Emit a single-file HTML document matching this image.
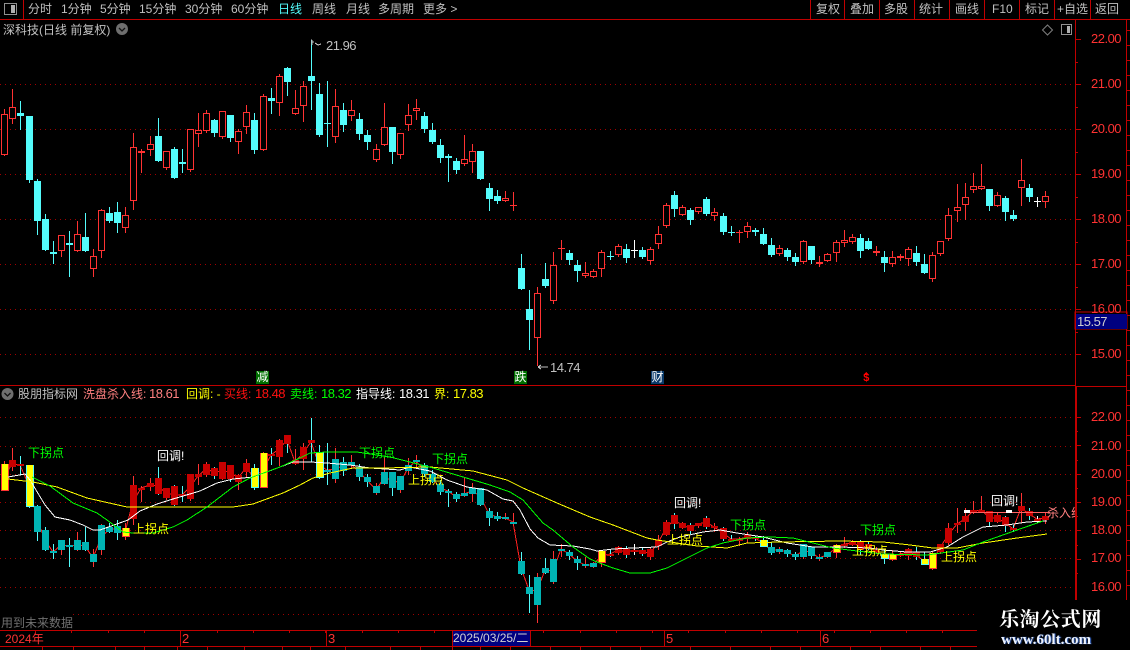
<!DOCTYPE html>
<html><head><meta charset="utf-8"><style>
html,body{margin:0;padding:0;background:#000;}
#r{position:relative;width:1130px;height:650px;background:#000;overflow:hidden;font-family:"Liberation Sans","WenQuanYi Zen Hei","Noto Sans CJK SC",sans-serif;font-size:12px;line-height:14px;color:#c0c0c0;}
#r span{position:absolute;white-space:nowrap;}
svg{position:absolute;left:0;top:0;}
.n{font-size:13px;letter-spacing:-.5px;}
.g{color:#00ff00;} .y{color:#ffff00;} .w{color:#fff;}
.ax{color:#ff3232;font-size:13px;letter-spacing:-.5px;}
</style></head><body><div id="r">
<svg id="s" width="1130" height="650" shape-rendering="crispEdges"></svg>
<span style="left:28px;top:2px">分时</span><span style="left:61px;top:2px">1分钟</span><span style="left:100px;top:2px">5分钟</span><span style="left:139px;top:2px">15分钟</span><span style="left:185px;top:2px">30分钟</span><span style="left:231px;top:2px">60分钟</span><span style="left:278px;top:2px;color:#54fcfc">日线</span><span style="left:312px;top:2px">周线</span><span style="left:346px;top:2px">月线</span><span style="left:378px;top:2px">多周期</span><span style="left:423px;top:2px">更多 &gt;</span>
<span style="left:816px;top:2px">复权</span><span style="left:850px;top:2px">叠加</span><span style="left:884px;top:2px">多股</span><span style="left:919px;top:2px">统计</span><span style="left:955px;top:2px">画线</span><span style="left:992px;top:2px">F10</span><span style="left:1025px;top:2px">标记</span><span style="left:1057px;top:2px">+自选</span><span style="left:1095px;top:2px">返回</span>
<span style="left:3px;top:23px">深科技(日线 前复权)</span>
<span class="n" style="left:326px;top:39px">21.96</span>
<span class="n" style="left:550px;top:361px">14.74</span>
<span style="left:256px;top:371px;width:13px;height:13px;background:#007000;color:#fff;text-align:center;line-height:13px">减</span>
<span style="left:514px;top:371px;width:13px;height:13px;background:#007000;color:#fff;text-align:center;line-height:13px">跌</span>
<span style="left:651px;top:371px;width:13px;height:13px;background:#0a3a6a;color:#fff;text-align:center;line-height:13px">财</span>
<span style="left:863px;top:373px;color:#ff0000;font-family:'Liberation Mono',monospace;font-weight:bold;font-size:11px;line-height:12px">$</span>
<span style="left:18px;top:387px">股朋指标网</span>
<span style="left:83px;top:387px;color:#ff8080">洗盘杀入线:</span><span class="n" style="left:149px;top:387px;color:#ff8080">18.61</span>
<span style="left:186px;top:387px;color:#ffff00">回调: -</span>
<span style="left:224px;top:387px;color:#ff1010">买线:</span><span class="n" style="left:255px;top:387px;color:#ff1010">18.48</span>
<span style="left:290px;top:387px;color:#00ff00">卖线:</span><span class="n" style="left:321px;top:387px;color:#00ff00">18.32</span>
<span style="left:356px;top:387px;color:#fff">指导线:</span><span class="n" style="left:399px;top:387px;color:#fff">18.31</span>
<span style="left:434px;top:387px;color:#ffff00">界:</span><span class="n" style="left:453px;top:387px;color:#ffff00">17.83</span>
<span class="g" style="left:28px;top:446px">下拐点</span><span class="w" style="left:157px;top:449px">回调!</span><span class="y" style="left:133px;top:522px">上拐点</span><span class="g" style="left:359px;top:446px">下拐点</span><span class="g" style="left:432px;top:452px">下拐点</span><span class="y" style="left:408px;top:473px">上拐点</span><span class="w" style="left:674px;top:496px">回调!</span><span class="y" style="left:667px;top:533px">上拐点</span><span class="g" style="left:730px;top:518px">下拐点</span><span class="g" style="left:860px;top:523px">下拐点</span><span class="y" style="left:852px;top:544px">上拐点</span><span class="y" style="left:941px;top:550px">上拐点</span><span class="w" style="left:991px;top:494px">回调!</span>
<span style="left:1047px;top:506px;width:28px;overflow:hidden;color:#ff8080">杀入线</span>
<span style="left:1px;top:616px;color:#707070">用到未来数据</span>
<span class="ax" style="left:5px;top:632px;font-size:12px;letter-spacing:0">2024年</span><span class="ax" style="left:182px;top:632px">2</span><span class="ax" style="left:328px;top:632px">3</span><span class="ax" style="left:666px;top:632px">5</span><span class="ax" style="left:822px;top:632px">6</span>
<span style="left:453px;top:631px;width:77px;height:15px;background:#000080;color:#d0d0d0;font-size:12px;line-height:15px;letter-spacing:0">2025/03/25/二</span>
<span class="ax" style="left:1091px;top:32px">22.00</span><span class="ax" style="left:1091px;top:77px">21.00</span><span class="ax" style="left:1091px;top:122px">20.00</span><span class="ax" style="left:1091px;top:167px">19.00</span><span class="ax" style="left:1091px;top:212px">18.00</span><span class="ax" style="left:1091px;top:257px">17.00</span><span class="ax" style="left:1091px;top:302px">16.00</span><span class="ax" style="left:1091px;top:347px">15.00</span>
<span style="left:1076px;top:314px;width:50px;height:15px;background:#000080;color:#d0d0d0;font-size:13px;line-height:15px;padding-left:1px;letter-spacing:-.5px">15.57</span>
<span class="ax" style="left:1091px;top:410px">22.00</span><span class="ax" style="left:1091px;top:439px">21.00</span><span class="ax" style="left:1091px;top:467px">20.00</span><span class="ax" style="left:1091px;top:495px">19.00</span><span class="ax" style="left:1091px;top:523px">18.00</span><span class="ax" style="left:1091px;top:551px">17.00</span><span class="ax" style="left:1091px;top:580px">16.00</span>
<span style="left:977px;top:600px;width:153px;height:50px;background:#000"></span>
<span style="left:999px;top:606px;color:#fff;font-family:'Noto Serif CJK SC','Liberation Serif',serif;font-size:20px;line-height:24px;font-weight:bold;letter-spacing:.6px">乐淘公式网</span>
<span style="left:1001px;top:632px;color:#eef4ff;font-family:'Liberation Serif',serif;font-size:15px;line-height:16px;font-weight:bold;text-shadow:1px 0 1px #3060c0">www.60lt.com</span>
</div>
<script>
var D="r,109,114,155,155;r,89,107,119,123;c,101,113,116,129;c,116,116,180,182;c,179,181,221,234;c,214,219,250,250;c,241,252,254,263;r,235,235,251,256;c,231,243,245,276;r,221,234,251,251;c,213,237,251,251;r,249,256,269,276;r,209,210,251,257;c,207,213,221,222;c,202,212,223,232;r,207,215,228,232;r,133,147,201,209;r,149,151,153,172;r,136,144,150,155;c,118,136,161,161;r,151,151,168,169;c,147,149,178,178;c,149,162,164,172;r,129,129,170,171;r,113,130,134,146;r,110,113,131,132;c,119,120,133,136;r,111,111,137,138;c,115,115,138,141;r,129,131,142,153;r,105,112,127,133;c,113,120,150,153;r,94,96,150,150;c,88,98,101,113;r,74,76,103,115;c,67,68,82,95;r,90,108,114,114;r,81,86,106,121;c,40,76,81,109;c,83,94,135,136;c,81,123,124,146;r,89,106,137,142;c,103,110,125,131;r,100,110,116,120;c,113,119,134,139;c,130,135,142,149;r,144,149,160,161;r,103,127,145,145;c,127,127,152,163;r,133,133,155,158;r,104,115,125,130;r,99,108,111,119;c,112,116,129,132;c,123,130,142,143;c,139,145,158,162;c,154,156,158,181;c,158,161,170,173;r,135,159,164,165;r,144,151,162,172;c,151,151,179,179;c,183,188,199,210;c,190,196,201,203;r,191,198,201,201;r,192,205,206,210;c,254,268,289,289;c,290,309,320,349;r,287,293,338,365;c,263,279,286,287;r,252,265,301,303;r,240,248,249,259;c,250,253,260,264;c,260,265,271,281;r,262,273,276,277;r,269,271,277,277;r,250,252,269,276;c,251,256,257,259;r,244,246,255,256;c,244,249,258,262;w,240,250,251,257;c,247,250,257,258;r,247,249,261,264;r,226,234,244,248;r,203,205,226,227;c,191,195,209,216;r,205,207,215,215;c,208,210,220,224;r,207,207,212,213;c,197,199,214,215;r,208,212,216,220;c,213,216,232,234;c,226,232,233,235;r,230,232,233,242;r,222,226,232,237;c,228,230,232,235;c,228,234,244,244;c,238,245,255,256;r,245,248,254,255;c,248,250,257,260;c,253,257,262,265;r,240,241,262,263;c,246,246,260,263;r,256,262,264,266;r,253,254,261,261;r,240,242,253,261;r,230,240,243,246;r,234,237,242,243;c,234,238,251,257;c,238,241,249,249;r,246,251,253,255;c,251,257,263,271;r,251,257,264,266;r,254,256,258,260;r,247,249,259,265;c,246,253,262,265;c,254,264,273,273;r,252,255,279,281;r,241,241,254,255;r,208,215,239,240;r,184,207,211,221;r,183,197,205,219;r,173,186,190,192;r,164,186,189,189;c,189,189,206,210;r,192,195,206,206;c,196,198,212,220;c,210,215,219,220;r,159,180,188,205;c,184,188,197,201;w,197,201,202,206;r,191,196,202,207".split(";").map(function(a){a=a.split(",");return[a[0],+a[1],+a[2],+a[3],+a[4]];});
var col={r:"#ff3232",c:"#54fcfc",w:"#ffffff"},LR="#c00000",o=[];
function R(x,y,w,h,f,s){o.push('<rect x="'+x+'" y="'+y+'" width="'+w+'" height="'+h+'" fill="'+f+'"'+(s?' stroke="'+s+'"':'')+'/>');}
function M(y){return Math.round(417+(y-39)*.6296);}
var G='stroke="#a00000" stroke-dasharray="1 4"';
[84,129,174,219,264,309,354].forEach(function(y){o.push('<line x1="0" y1="'+(y+.5)+'" x2="1075" y2="'+(y+.5)+'" '+G+'/>');});
[417,446,474,502,530,558,587].forEach(function(y){o.push('<line x1="0" y1="'+(y+.5)+'" x2="1075" y2="'+(y+.5)+'" '+G+'/>');});
o.push('<line x1="73" y1="614.5" x2="977" y2="614.5" '+G+'/>');
R(0,19,1130,1,LR);R(0,385,1076,1,LR);R(1075,20,1,366,LR);R(1075,386,2,214,LR);R(1126,20,1,580,LR);R(1076,386,51,1,LR);
R(0,630,977,1,LR);R(0,646,977,1,LR);
R(23,0,1,19,LR);
[810,844,879,914,949,984,1019,1054,1090].forEach(function(x){R(x,0,1,19,LR);});
[180,326,664,820].forEach(function(x){R(x,630,1,16,LR);});
R(452,630,1,16,LR);R(530,630,1,16,LR);
for(var x=35;x<977;x+=36.3)R(Math.round(x),630,1,3,LR);
[42,73,115,144,177,207,244,282,310,345,390,420,452,480,510,550,580,610,640,690,730,770,800,850,880,920,950].forEach(function(x){R(x,646,1,4,LR);});
for(var y=39;y<=354;y+=22.5){var m=Math.round((y-39)/22.5)%2==0;R(1075,Math.round(y),m?6:3,1,LR);}
for(var y=417;y<=587;y+=14.17){var m=Math.round((y-417)/14.17)%2==0;R(1075,Math.round(y),m?6:3,1,LR);}
for(var y=30;y<600;y+=15){R(1127,Math.round(y),3,1,LR);}
R(1075,312,52,17,"none",LR);
function X(i){return Math.round(4.3+8.07*i);}
var pts=D.map(function(d,i){return X(i)+","+M((d[2]+d[3])/2);}).join(" ");
o.push('<polyline points="'+pts+'" fill="none" stroke="#ff2020"/>');
function P(s,c){o.push('<polyline points="'+s+'" fill="none" stroke="'+c+'"/>');}
D.forEach(function(d,i){var x=X(i),c=col[d[0]];
 R(x,d[1],1,d[4]-d[1]+1,c);
 var h=d[3]-d[2];
 if(h<=2){R(x-3,d[2],7,Math.max(1,h),c);}
 else if(d[0]=="r"){R(x-2.5,d[2]+.5,6,h-1,"#000",c);}
 else R(x-3,d[2],7,h,c);
});
var Y={0:1,3:1,15:1,31:1,32:1,39:1,74:1,94:1,103:1,109:1,110:1,114:1,115:1};
function isR(i){return (i>=1&&i<=2)||(i>=16&&i<=30)||(i>=33&&i<=38)||(i>=75&&i<=93)||(i>=104&&i<=108)||(i>=111&&i<=113)||i>=116;}
D.forEach(function(d,i){var x=X(i),c=col[d[0]],t=M(d[2]),b=M(d[3]),h=Math.max(b-t,2);
 R(x,M(d[1]),1,M(d[4])-M(d[1])+1,c);
 if(Y[i]){R(x-3,t,8,h+1,c);R(x-2,t,6,h,"#ffff00");}
 else R(x-3,t,7,h,isR(i)?"#c80000":"#00b4b4");
});
R(965,512,85,1,"#ff6060");
[[964,510],[1006,510]].forEach(function(p){R(p[0],p[1],6,3,"#fff");});
P("8,477 25,474 30,480 45,505 55,517 70,520 83,525 93,530 100,530 128,520 140,511 157,504 173,499 200,491 217,483 233,479 253,477 280,467 293,462 310,462 327,463 350,465 370,468 400,470 410,467 430,471 447,480 467,487 487,490 503,499 513,501 520,510 530,529 538,538 550,545 573,546 590,549 597,551 613,549 633,548 657,547 667,542 680,537 703,532 720,530 737,533 763,537 787,543 813,547 840,547 870,548 883,550 907,552 930,552 947,547 963,537 983,527 1007,525 1027,522 1047,521","#ffffff");
P("8,479 33,482 57,487 87,498 127,507 150,507 187,507 233,507 253,504 283,493 300,485 313,478 330,473 353,468 383,468 430,467 473,471 507,480 523,488 557,503 590,517 613,525 647,538 657,540 697,546 727,548 747,543 780,542 840,541 883,542 910,545 933,548 957,548 983,543 1017,538 1047,534","#ffff00");
P("32,477 50,486 73,503 97,513 107,520 123,532 133,533 153,533 173,527 187,520 207,507 233,487 250,478 280,467 300,458 310,453 327,452 357,452 390,457 410,462 433,468 463,477 490,485 510,492 523,500 543,523 553,530 573,547 590,559 597,562 613,568 630,573 650,573 667,568 687,558 707,548 723,543 747,538 770,537 793,538 813,543 833,548 857,551 883,554 927,555 963,550 983,542 1017,530 1043,521","#00ff00");
o.push('<path d="M311 40h1M312 40v5M311 42h3M315 43l3 2 3-1" stroke="#c0c0c0" fill="none"/>');
o.push('<path d="M548 367h-10M538 367l3-2M538 367l3 2" stroke="#c0c0c0" fill="none"/>');
R(4.5,3.5,12,11,"#000","#909090");R(11,5,4,8,"#b0b0b0");
R(1061.5,24.5,10,10,"#000","#909090");R(1067,26,3,7,"#b0b0b0");
o.push('<path d="M1047.5 25l5 5-5 5-5-5z" fill="none" stroke="#808080" shape-rendering="auto"/>');
o.push('<g shape-rendering="auto"><circle cx="122" cy="29" r="6" fill="#6e6e6e"/><path d="M119 28l3 3 3-3" stroke="#111" stroke-width="1.3" fill="none"/><circle cx="7.5" cy="394" r="6" fill="#6e6e6e"/><path d="M4.5 393l3 3 3-3" stroke="#111" stroke-width="1.3" fill="none"/></g>');
o.push('<path d="M866 372l3 3h-6z" fill="#ff0000"/>');
document.getElementById("s").innerHTML=o.join("");
</script>
</body></html>
